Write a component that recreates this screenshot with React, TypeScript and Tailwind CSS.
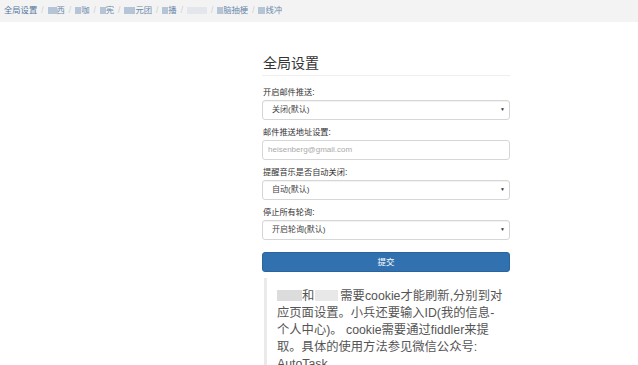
const crumbs: { blur: number; text: string; faded?: boolean }[] = [
  { blur: 9, text: "西" },
  { blur: 6, text: "咖" },
  { blur: 6, text: "宪" },
  { blur: 11, text: "元团" },
  { blur: 6, text: "播" },
  { blur: 20, text: "", faded: true },
  { blur: 6, text: "脑抽梗" },
  { blur: 7, text: "线冲" },
];

function Field({ label, children }: { label: string; children: React.ReactNode }) {
  return (
    <div className="mb-[8px]">
      <div className="text-[8.2px] leading-[10px] text-[#333] mb-[2px] pl-[1px]">{label}</div>
      {children}
    </div>
  );
}

function Select({ value }: { value: string }) {
  return (
    <div className="h-[20px] border border-[#d6d6d6] rounded-[3px] bg-white flex items-center justify-between pl-[9px] pr-[4px] shadow-[inset_0_1px_1px_rgba(0,0,0,0.05)]">
      <span className="text-[8px] text-[#444]">{value}</span>
      <span className="text-[5px] text-[#333]">▼</span>
    </div>
  );
}

const note = [
  null,
  "应页面设置。小兵还要输入ID(我的信息-",
  "个人中心)。 cookie需要通过fiddler来提",
  "取。具体的使用方法参见微信公众号:",
  "AutoTask",
];

export default function App() {
  return (
    <div
      className="w-[638px] h-[365px] bg-white overflow-hidden"
      style={{ fontFamily: '"Liberation Sans", "Noto Sans CJK SC", sans-serif' }}
    >
      {/* breadcrumb */}
      <div className="h-[22px] bg-[#f3f3f3] flex items-center pl-[4px] pb-[1px] text-[8.3px] text-[#55769d]">
        <span>全局设置</span>
        {crumbs.map((c, i) => (
          <span key={i} className="flex items-center">
            <span className="mx-[4px] text-[#cfcfcf]">/</span>
            <span
              className={`inline-block h-[7px] ${c.faded ? "bg-[#e3e7ec]" : "bg-[#b5c5d8]"}`}
              style={{ width: c.blur }}
            />
            {c.text && <span className="text-[#6a88ab]">{c.text}</span>}
          </span>
        ))}
      </div>

      <div className="w-[248px] ml-[262px] pt-[32px]">
        <h2 className="text-[14px] leading-[18px] text-[#333] pb-[3px] border-b border-[#eee] mb-[12px] pl-[1px]">
          全局设置
        </h2>

        <Field label="开启邮件推送:">
          <Select value="关闭(默认)" />
        </Field>
        <Field label="邮件推送地址设置:">
          <div className="h-[20px] border border-[#d6d6d6] rounded-[3px] bg-white flex items-center pl-[5px]">
            <span className="text-[8px] text-[#aaa]">heisenberg@gmail.com</span>
          </div>
        </Field>
        <Field label="提醒音乐是否自动关闭:">
          <Select value="自动(默认)" />
        </Field>
        <Field label="停止所有轮询:">
          <Select value="开启轮询(默认)" />
        </Field>

        <button className="w-full h-[20px] rounded-[3px] bg-[#3171b0] border border-[#2a649e] text-white text-[8.5px]">
          提交
        </button>

        <div className="mt-[6px] ml-[2px] border-l-[3px] border-[#eaeaea] pl-[10px] pt-[10px] text-[12.3px] leading-[16.8px] text-[#555] whitespace-nowrap">
          <div>
            <span className="inline-block w-[25px] h-[11px] bg-[#dcdcdc] align-[-1px]" />和
            <span className="inline-block w-[23px] h-[11px] bg-[#e8e8e8] align-[-1px] ml-[1px] mr-[2px]" />
            需要cookie才能刷新,分别到对
          </div>
          {note.slice(1).map((l) => (
            <div key={l}>{l}</div>
          ))}
        </div>
      </div>
    </div>
  );
}
